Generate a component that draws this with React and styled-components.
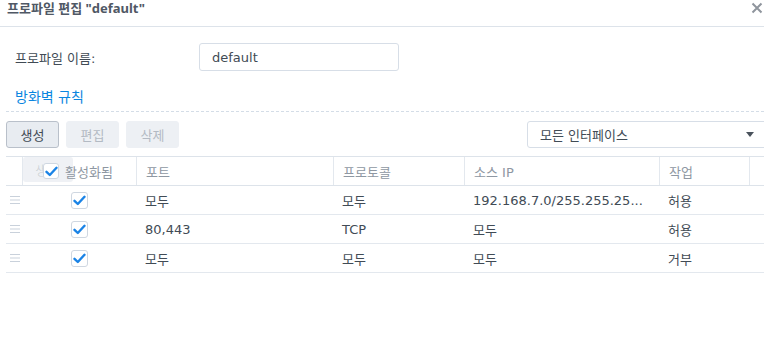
import React from "react";
import styled, { createGlobalStyle } from "styled-components";

const Global = createGlobalStyle`
  html, body { margin: 0; padding: 0; background: #fff; }
  body { font-family: "DejaVu Sans", "Noto Sans CJK KR", sans-serif; font-size: 13px; color: #414b55; }
  * { box-sizing: border-box; }
`;

const Window = styled.div`
  width: 764px;
  height: 344px;
  overflow: hidden;
  position: relative;
`;

const TitleBar = styled.div`
  height: 27px;
  border-bottom: 1px solid #dde3ea;
  display: flex;
  align-items: flex-start;
  justify-content: space-between;
  padding: 0 0 0 7px;
`;

const Title = styled.div`
  font-family: "Noto Sans", "Noto Sans CJK KR", sans-serif;
  font-size: 13px;
  font-weight: 700;
  color: #505865;
  line-height: 16px;
  margin-top: 0;
`;

const Close = styled.div`
  width: 12px;
  height: 12px;
  margin: 2px 1px 0 0;
  display: flex;
`;

const Body = styled.div`
  padding: 0 0 0 6px;
`;

const FormRow = styled.div`
  display: flex;
  align-items: center;
  height: 28px;
  margin-top: 16px;
  padding-left: 9px;
`;

const Label = styled.div`
  width: 184px;
  font-size: 13px;
  color: #414b55;
`;

const Input = styled.div`
  width: 200px;
  height: 28px;
  border: 1px solid #d7dee7;
  border-radius: 3px;
  padding: 0 12px;
  display: flex;
  align-items: center;
  font-size: 13px;
  color: #414b55;
`;

const Section = styled.div`
  margin-top: 14px;
  padding: 0 0 4px 9px;
  height: 27px;
  border-bottom: 1px dashed #d4dde7;
  color: #0a86e0;
  font-size: 14px;
  display: flex;
  align-items: center;
`;

const Toolbar = styled.div`
  display: flex;
  align-items: center;
  gap: 7px;
  margin-top: 8px;
  height: 28px;
`;

const Button = styled.div`
  width: 53px;
  height: 27px;
  border-radius: 3px;
  display: flex;
  align-items: center;
  justify-content: center;
  font-size: 13px;
  background: ${(p) => (p.disabled ? "#edf0f4" : "#e8ecf1")};
  border: 1px solid ${(p) => (p.disabled ? "#edf0f4" : "#b9c0ca")};
  color: ${(p) => (p.disabled ? "#b3bac3" : "#414b55")};
`;

const Spacer = styled.div`
  flex: 1;
`;

const Select = styled.div`
  width: 240px;
  height: 27px;
  margin-right: -3px;
  border: 1px solid #d7dee7;
  border-radius: 3px;
  display: flex;
  align-items: center;
  justify-content: space-between;
  padding: 0 12px 0 12px;
  font-size: 13px;
  color: #414b55;
`;

const Caret = styled.div`
  width: 0;
  height: 0;
  border-left: 4px solid transparent;
  border-right: 4px solid transparent;
  border-top: 5px solid #4a525c;
`;

const Table = styled.div`
  margin-top: 8px;
  position: relative;
`;

const cols = "16px 114px 197px 131px 195px 90px 1fr";

const HeadRow = styled.div`
  display: grid;
  grid-template-columns: ${cols};
  height: 30px;
  border-top: 1px solid #dde3ea;
  border-bottom: 1px solid #dde3ea;
`;

const HeadCell = styled.div`
  display: flex;
  align-items: center;
  padding-left: ${(p) => p.pl ?? 9}px;
  border-left: ${(p) => (p.first ? "none" : "1px solid #e3e8ee")};
  color: #8e97a2;
  font-size: 13px;
  gap: 6px;
`;

const Row = styled.div`
  display: grid;
  grid-template-columns: ${cols};
  height: 29px;
  border-bottom: 1px solid #e3e8ee;
`;

const Cell = styled.div`
  display: flex;
  align-items: center;
  justify-content: ${(p) => (p.center ? "center" : "flex-start")};
  padding-left: ${(p) => (p.center ? 0 : 9)}px;
  font-size: 13px;
  color: #414b55;
  white-space: nowrap;
  overflow: hidden;
`;

const Handle = styled.div`
  display: flex;
  align-items: center;
  padding-left: 4px;
`;

const Box = styled.div`
  position: relative;
  width: ${(p) => p.size}px;
  height: ${(p) => p.size}px;
  border: 1px solid #cfd7e1;
  border-radius: 3px;
  background: #fff;
  display: flex;
  align-items: center;
  justify-content: center;
`;

const Ghost = styled.div`
  position: absolute;
  left: 17px;
  top: 1px;
  width: 50px;
  height: 25px;
  background: rgba(236, 239, 243, 0.85);
  border-radius: 3px;
  color: rgba(65, 75, 85, 0.18);
  font-size: 13px;
  padding-left: 12px;
  display: flex;
  align-items: center;
  pointer-events: none;
`;

const HeadLabel = styled.span`
  position: relative;
`;

const Check = () => (
  <svg width="13" height="11" viewBox="0 0 13 11">
    <path d="M1.5 5.8 L4.8 9 L11.5 1.8" fill="none" stroke="#1a83e6" strokeWidth="2.4" strokeLinecap="round" strokeLinejoin="round" />
  </svg>
);

const HandleIcon = () => (
  <svg width="10" height="8" viewBox="0 0 10 8">
    <path d="M0 0.5H10M0 4H10M0 7.5H10" stroke="#c9d1db" strokeWidth="1" />
  </svg>
);

const rows = [
  { port: "모두", proto: "모두", src: "192.168.7.0/255.255.25...", act: "허용" },
  { port: "80,443", proto: "TCP", src: "모두", act: "허용" },
  { port: "모두", proto: "모두", src: "모두", act: "거부" },
];

export default function App() {
  return (
    <Window>
      <Global />
      <TitleBar>
        <Title>프로파일 편집 "default"</Title>
        <Close>
          <svg width="12" height="12" viewBox="0 0 12 12">
            <path d="M1.5 1.5L10.5 10.5M10.5 1.5L1.5 10.5" stroke="#8f959d" strokeWidth="2" />
          </svg>
        </Close>
      </TitleBar>
      <Body>
        <FormRow>
          <Label>프로파일 이름:</Label>
          <Input>default</Input>
        </FormRow>
        <Section>방화벽 규칙</Section>
        <Toolbar>
          <Button>생성</Button>
          <Button disabled>편집</Button>
          <Button disabled>삭제</Button>
          <Spacer />
          <Select>
            <span>모든 인터페이스</span>
            <Caret />
          </Select>
        </Toolbar>
        <Table>
          <HeadRow>
            <HeadCell first />
            <HeadCell pl={20}>
              <Ghost>생성</Ghost>
              <Box size={16}>
                <Check />
              </Box>
              <HeadLabel>활성화됨</HeadLabel>
            </HeadCell>
            <HeadCell>포트</HeadCell>
            <HeadCell>프로토콜</HeadCell>
            <HeadCell>소스 IP</HeadCell>
            <HeadCell>작업</HeadCell>
            <HeadCell />
          </HeadRow>
          {rows.map((r, i) => (
            <Row key={i}>
              <Handle>
                <HandleIcon />
              </Handle>
              <Cell center>
                <Box size={17}>
                  <Check />
                </Box>
              </Cell>
              <Cell>{r.port}</Cell>
              <Cell>{r.proto}</Cell>
              <Cell>{r.src}</Cell>
              <Cell>{r.act}</Cell>
              <Cell />
            </Row>
          ))}
        </Table>
      </Body>
    </Window>
  );
}
